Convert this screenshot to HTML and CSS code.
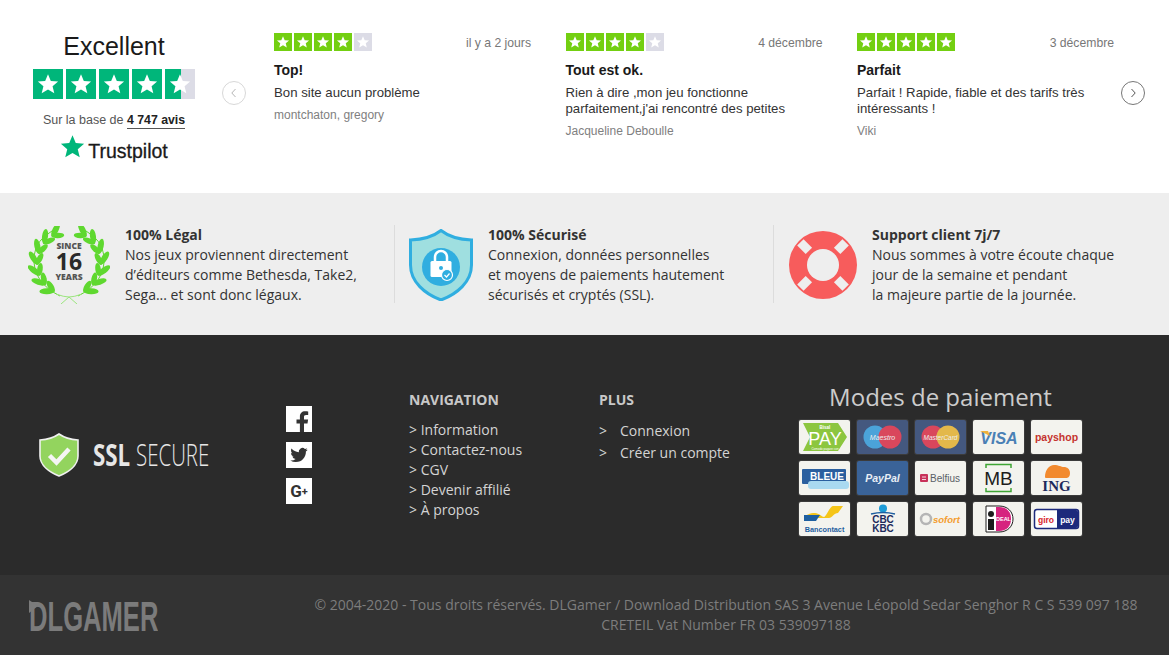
FILE: index.html
```html
<!DOCTYPE html>
<html lang="fr">
<head>
    <meta charset="UTF-8">
    <title>DLGamer</title>
    <link rel="stylesheet" href="styles.css">
</head>
<body>
    <svg class="defs" width="0" height="0">
        <defs>
            <polygon id="tp-star" points="12,3 14.6,9.2 21.3,9.7 16.200,14.100 17.800,20.600 12,17.100 6.200,20.600 7.800,14.100 2.700,9.700 9.400,9.200"/>
            <use id="star" href="#tp-star" transform="translate(1.560 1.560) scale(.87)"/>
            <g id="sprig">
                <ellipse cx="46" cy="1.500" rx="7.500" ry="3" transform="rotate(-32 46 1.500)"/>
                <ellipse cx="45" cy="7.500" rx="6.500" ry="2.800" transform="rotate(28 45 7.500)"/>
            </g>
            <g id="branch" fill="#5fd82f">
                <path d="M32 70Q4 56 6 30 8 14 24 5" fill="none" stroke="#5fd82f" stroke-width="1"/>
                <use href="#sprig" transform="rotate(-30 41 37)"/>
                <use href="#sprig" transform="rotate(-50 41 37)"/>
                <use href="#sprig" transform="rotate(-70 41 37)"/>
                <use href="#sprig" transform="rotate(-90 41 37)"/>
                <use href="#sprig" transform="rotate(-110 41 37)"/>
                <use href="#sprig" transform="rotate(-130 41 37)"/>
                <use href="#sprig" transform="rotate(-150 41 37)"/>
            </g>
        </defs>
    </svg>

    <section class="reviews">
        <div class="summary">
            <div class="summary-title">Excellent</div>
            <div class="stars-big">
                <svg class="box green"><g fill="#fff" transform="scale(1.250)"><use href="#star"/></g></svg>
                <svg class="box green"><g fill="#fff" transform="scale(1.250)"><use href="#star"/></g></svg>
                <svg class="box green"><g fill="#fff" transform="scale(1.250)"><use href="#star"/></g></svg>
                <svg class="box green"><g fill="#fff" transform="scale(1.250)"><use href="#star"/></g></svg>
                <svg class="box half"><g fill="#fff" transform="scale(1.250)"><use href="#star"/></g></svg>
            </div>
            <div class="summary-count">Sur la base de <a class="count-link">4 747 avis</a></div>
            <div class="tp-logo">
                <svg width="25" height="25" viewBox="2 2.500 20 19"><use href="#tp-star" fill="#00b67a"/></svg>
                <span>Trustpilot</span>
            </div>
        </div>

        <div class="arrow arrow-prev">
            <svg width="8" height="10" viewBox="0 0 8 10"><path d="M5.500 1 1.800 5l3.700 4" fill="none" stroke="#b5b5b5" stroke-width="1"/></svg>
        </div>

        <div class="review-list">
            <article class="review">
                <div class="review-head">
                    <div class="stars-small">
                        <svg class="tick lime"><g fill="#fff" transform="scale(.75)"><use href="#star"/></g></svg>
                        <svg class="tick lime"><g fill="#fff" transform="scale(.75)"><use href="#star"/></g></svg>
                        <svg class="tick lime"><g fill="#fff" transform="scale(.75)"><use href="#star"/></g></svg>
                        <svg class="tick lime"><g fill="#fff" transform="scale(.75)"><use href="#star"/></g></svg>
                        <svg class="tick off"><g fill="#fff" transform="scale(.75)"><use href="#star"/></g></svg>
                    </div>
                    <span class="review-date">il y a 2 jours</span>
                </div>
                <h3>Top!</h3>
                <p>Bon site aucun problème</p>
                <div class="author">montchaton, gregory</div>
            </article>
            <article class="review">
                <div class="review-head">
                    <div class="stars-small">
                        <svg class="tick lime"><g fill="#fff" transform="scale(.75)"><use href="#star"/></g></svg>
                        <svg class="tick lime"><g fill="#fff" transform="scale(.75)"><use href="#star"/></g></svg>
                        <svg class="tick lime"><g fill="#fff" transform="scale(.75)"><use href="#star"/></g></svg>
                        <svg class="tick lime"><g fill="#fff" transform="scale(.75)"><use href="#star"/></g></svg>
                        <svg class="tick off"><g fill="#fff" transform="scale(.75)"><use href="#star"/></g></svg>
                    </div>
                    <span class="review-date">4 décembre</span>
                </div>
                <h3>Tout est ok.</h3>
                <p>Rien à dire ,mon jeu fonctionne<br>parfaitement,j'ai rencontré des petites</p>
                <div class="author">Jacqueline Deboulle</div>
            </article>
            <article class="review">
                <div class="review-head">
                    <div class="stars-small">
                        <svg class="tick lime"><g fill="#fff" transform="scale(.75)"><use href="#star"/></g></svg>
                        <svg class="tick lime"><g fill="#fff" transform="scale(.75)"><use href="#star"/></g></svg>
                        <svg class="tick lime"><g fill="#fff" transform="scale(.75)"><use href="#star"/></g></svg>
                        <svg class="tick lime"><g fill="#fff" transform="scale(.75)"><use href="#star"/></g></svg>
                        <svg class="tick lime"><g fill="#fff" transform="scale(.75)"><use href="#star"/></g></svg>
                    </div>
                    <span class="review-date">3 décembre</span>
                </div>
                <h3>Parfait</h3>
                <p>Parfait ! Rapide, fiable et des tarifs très<br>intéressants !</p>
                <div class="author">Viki</div>
            </article>
        </div>

        <div class="arrow arrow-next">
            <svg width="8" height="10" viewBox="0 0 8 10"><path d="M2.500 1 6.200 5 2.500 9" fill="none" stroke="#555" stroke-width="1"/></svg>
        </div>
    </section>

    <section class="features">
        <div class="feature feature-legal">
            <svg class="feature-icon" width="82" height="78" viewBox="0 0 82 78">
                <use href="#branch"/>
                <use href="#branch" transform="translate(82 0) scale(-1 1)"/>
                <path d="M28 68Q36 71 41 71L33 78M54 68Q46 71 41 71L49 78" fill="none" stroke="#9be57e" stroke-width="1"/>
                <text class="since" x="41" y="23" text-anchor="middle">SINCE</text>
                <text class="since-num" x="41" y="44" text-anchor="middle">16</text>
                <text class="since" x="41" y="54" text-anchor="middle">YEARS</text>
            </svg>
            <div class="feature-text">
                <h4>100% Légal</h4>
                Nos jeux proviennent directement<br>d’éditeurs comme Bethesda, Take2,<br>Sega... et sont donc légaux.
            </div>
        </div>
        <div class="feature feature-secure">
            <svg class="feature-icon" width="64" height="72" viewBox="0 0 64 72">
                <path d="M32 1.500C25 7 14 10.500 1.500 11V36C1.500 53 16 65 32 71 48 65 62.500 53 62.500 36V11C50 10.500 39 7 32 1.500Z" fill="#9fdfe0" stroke="#30aee0" stroke-width="3"/>
                <circle cx="32" cy="38" r="19" fill="#30aee0"/>
                <path d="M26 32v-4a6 6 0 0 1 12 0v4" fill="none" stroke="#fff" stroke-width="2.500"/>
                <rect x="21.500" y="32" width="21" height="16" rx="1.500" fill="#fff"/>
                <circle cx="32" cy="39" r="2" fill="#30aee0"/>
                <circle cx="38" cy="46" r="5.500" fill="#30aee0" stroke="#fff" stroke-width="1.200"/>
                <path d="M35.500 46l2 2 3-3.500" fill="none" stroke="#fff" stroke-width="1.200"/>
            </svg>
            <div class="feature-text">
                <h4>100% Sécurisé</h4>
                Connexion, données personnelles<br>et moyens de paiements hautement<br>sécurisés et cryptés (SSL).
            </div>
        </div>
        <div class="feature feature-support">
            <svg class="feature-icon" width="68" height="68" viewBox="-34 -34 68 68">
                <circle r="34" fill="#f75c5c"/>
                <circle r="16" fill="#eee"/>
                <g fill="#eee">
                    <rect x="-4.500" y="-32" width="9" height="12" transform="rotate(-45)"/>
                    <rect x="-4.500" y="-32" width="9" height="12" transform="rotate(45)"/>
                    <rect x="-4.500" y="-32" width="9" height="12" transform="rotate(135)"/>
                    <rect x="-4.500" y="-32" width="9" height="12" transform="rotate(-135)"/>
                </g>
            </svg>
            <div class="feature-text">
                <h4>Support client 7j/7</h4>
                Nous sommes à votre écoute chaque<br>jour de la semaine et pendant<br>la majeure partie de la journée.
            </div>
        </div>
    </section>

    <footer class="footer">
        <svg class="ssl" width="170" height="44" viewBox="0 0 170 44">
            <path d="M20 1C15 4.500 8 6.500 1 7V23C1 32 10 39 20 43 30 39 39 32 39 23V7C32 6.500 25 4.500 20 1Z" fill="#93d45e" stroke="#f0f0f0" stroke-width="1.600"/>
            <path d="M10.500 22.500 17.500 29.500 30 16" fill="none" stroke="#f5f5f5" stroke-width="4.500"/>
            <text class="ssl-bold" transform="translate(54 33) scale(.72 1)">SSL</text>
            <text class="ssl-light" transform="translate(97 33) scale(.66 1)">SECURE</text>
        </svg>

        <div class="social">
            <a class="social-link">
                <svg width="26" height="26" viewBox="-1.500 -2.500 26 26"><path d="M16.500 26V15h3.500l.6-4h-4.100V8.500c0-1.200.4-2 2.100-2h2.100V3c-.4 0-1.700-.2-3.100-.2-3.100 0-5.200 1.900-5.200 5.300V11H9v4h3.400v11z" fill="#333"/></svg>
            </a>
            <a class="social-link">
                <svg width="26" height="26" viewBox="-6 -6 36 36"><path d="M23.953 4.570a10 10 0 01-2.825.775 4.958 4.958 0 002.163-2.723c-.951.555-2.005.959-3.127 1.184a4.920 4.920 0 00-8.384 4.482C7.690 8.095 4.067 6.130 1.640 3.162a4.822 4.822 0 00-.666 2.475c0 1.710.870 3.213 2.188 4.096a4.904 4.904 0 01-2.228-.616v.060a4.923 4.923 0 003.946 4.827 4.996 4.996 0 01-2.212.085 4.936 4.936 0 004.604 3.417 9.867 9.867 0 01-6.102 2.105c-.390 0-.779-.023-1.170-.067a13.995 13.995 0 007.557 2.209c9.053 0 13.998-7.496 13.998-13.985 0-.210 0-.420-.015-.630A9.935 9.935 0 0024 4.590z" fill="#333"/></svg>
            </a>
            <a class="social-link gplus">G<small>+</small></a>
        </div>

        <nav class="nav-col">
            <h5>NAVIGATION</h5>
            <ul>
                <li>&gt; Information</li>
                <li>&gt; Contactez-nous</li>
                <li>&gt; CGV</li>
                <li>&gt; Devenir affilié</li>
                <li>&gt; À propos</li>
            </ul>
        </nav>

        <nav class="plus-col">
            <h5>PLUS</h5>
            <ul>
                <li><span>&gt;</span>Connexion</li>
                <li><span>&gt;</span>Créer un compte</li>
            </ul>
        </nav>

        <div class="payment">
            <h2>Modes de paiement</h2>
            <div class="pay-grid">
                <svg class="pay" viewBox="0 0 51 34">
                    <polygon points="4,3 39,3 48,17 39,31 4,31 11,17" fill="#8cc63f"/>
                    <text x="26" y="25" class="t" font-size="18" fill="#fff" text-anchor="middle">PAY</text>
                    <text x="26" y="9" class="t" font-size="4.500" fill="#fff" text-anchor="middle" font-weight="700">Bisal</text>
                    <text x="26" y="29.500" class="t" font-size="3" fill="#fff" text-anchor="middle">Comodo pagare con</text>
                </svg>
                <svg class="pay dark" viewBox="0 0 51 34">
                    <circle cx="18" cy="17" r="11.500" fill="#4ba3d9"/><circle cx="33" cy="17" r="11.500" fill="#d9475c"/>
                    <text x="25.500" y="19.500" class="t i" font-size="7" fill="#eee" text-anchor="middle">Maestro</text>
                </svg>
                <svg class="pay dark" viewBox="0 0 51 34">
                    <circle cx="18" cy="17" r="11.500" fill="#d9475c"/><circle cx="33" cy="17" r="11.500" fill="#e3b84a"/>
                    <text x="25.500" y="19.500" class="t i" font-size="6.500" fill="#eee" text-anchor="middle">MasterCard</text>
                </svg>
                <svg class="pay" viewBox="0 0 51 34">
                    <text x="26" y="24" class="t i b" font-size="16" fill="#4a80b5" text-anchor="middle">VISA</text>
                    <path d="M7 11h8l2 5z" fill="#eeb13b"/>
                </svg>
                <svg class="pay" viewBox="0 0 51 34">
                    <text x="25.500" y="21" class="t b" font-size="10.500" fill="#c5332f" text-anchor="middle">payshop</text>
                </svg>

                <svg class="pay" viewBox="0 0 51 34">
                    <rect x="3" y="8" width="44" height="15" rx="1" fill="#2a5f9f"/>
                    <rect x="9" y="20" width="41" height="8" rx="3" fill="#a9d9f0"/>
                    <text x="28" y="18.500" class="t b" font-size="10" fill="#fff" text-anchor="middle">BLEUE</text>
                </svg>
                <svg class="pay blue" viewBox="0 0 51 34">
                    <text x="25.500" y="20.500" class="t i b" font-size="10.500" fill="#e8eef5" text-anchor="middle">PayPal</text>
                </svg>
                <svg class="pay" viewBox="0 0 51 34">
                    <rect x="5" y="13" width="8" height="8" rx="1" fill="#c8325a"/>
                    <path d="M7 16h4M7 18.500h4" stroke="#fff" stroke-width=".8"/>
                    <text x="15" y="21" class="t" font-size="10" fill="#5a6066">Belfius</text>
                </svg>
                <svg class="pay" viewBox="0 0 51 34">
                    <path d="M13 7V3.500h25V7M13 27v3.500h25V27" fill="none" stroke="#3fa535" stroke-width="1.500"/>
                    <text x="25.500" y="24" class="t" font-size="19" fill="#1c1c1c" text-anchor="middle">MB</text>
                </svg>
                <svg class="pay" viewBox="0 0 51 34">
                    <path d="M14 16c0-7 4-12 9-12s7 2 10 2 6 2 6 6-2 5-4 5H16c-1 0-2 0-2-1z" fill="#f28a2e"/>
                    <text x="25.500" y="30" class="s b" font-size="15" fill="#1d2a5c" text-anchor="middle">ING</text>
                </svg>

                <svg class="pay" viewBox="0 0 51 34">
                    <path d="M16 11c4 0 7 4 9 4s6-11 9-11h10l-5 7c-4 0-6 5-9 5H5c1-3 6-5 11-5z" fill="#f5c518"/>
                    <path d="M5 13h16l-4 6H5z" fill="#1e5fa0"/>
                    <text x="25.500" y="29.500" class="t b" font-size="7.300" fill="#1e5fa0" text-anchor="middle">Bancontact</text>
                </svg>
                <svg class="pay" viewBox="0 0 51 34">
                    <circle cx="26" cy="6.500" r="4" fill="#1e9cd7"/>
                    <path d="M14 12q12-3 24 0" fill="none" stroke="#1e5fa0" stroke-width="1.500"/>
                    <text x="26" y="21" class="t b" font-size="10" fill="#1d2a5c" text-anchor="middle">CBC</text>
                    <text x="26" y="30" class="t b" font-size="10" fill="#1d2a5c" text-anchor="middle">KBC</text>
                </svg>
                <svg class="pay" viewBox="0 0 51 34">
                    <circle cx="11" cy="17" r="5" fill="none" stroke="#b5b5b5" stroke-width="2.500"/>
                    <text x="18" y="21" class="t i b" font-size="9.500" fill="#f39c2d">sofort</text>
                </svg>
                <svg class="pay" viewBox="0 0 51 34">
                    <path d="M13 4h13c9 0 14 6 14 13s-5 13-14 13H13z" fill="#fff" stroke="#1c1c1c" stroke-width="1"/>
                    <path d="M23 5h3c8 0 12 5 12 12s-4 12-12 12h-3z" fill="#d6247f"/>
                    <rect x="15" y="17" width="6" height="11" fill="#1c1c1c"/><circle cx="18" cy="12" r="3" fill="#1c1c1c"/>
                    <text x="30.500" y="19" class="t b" font-size="5.500" fill="#fff" text-anchor="middle">DEAL</text>
                </svg>
                <svg class="pay" viewBox="0 0 51 34">
                    <rect x="3.500" y="7.500" width="44" height="19" rx="2.500" fill="#fff" stroke="#1d2a7c" stroke-width="1.500"/>
                    <path d="M26 8h19q2 0 2 2v14q0 2-2 2H26z" fill="#1d2a7c"/>
                    <text x="15" y="20.500" class="t b" font-size="8.500" fill="#d9262e" text-anchor="middle">giro</text>
                    <text x="36.500" y="20.500" class="t b" font-size="8.500" fill="#fff" text-anchor="middle">pay</text>
                </svg>
            </div>
        </div>
    </footer>

    <div class="bottom">
        <svg class="dl-logo" width="129" height="50" viewBox="0 -8 129 50">
            <text transform="translate(0 31) scale(.61 1)">DLGAMER</text>
            <polygon points="0,0 0,13 9,6" fill="#7b7b7b"/>
        </svg>
        <div class="copyright">© 2004-2020 - Tous droits réservés. DLGamer / Download Distribution SAS 3 Avenue Léopold Sedar Senghor R C S 539 097 188<br>CRETEIL Vat Number FR 03 539097188</div>
    </div>
</body>
</html>
```

FILE: styles.css
```css
body {
    margin: 0;
    font-family: "Open Sans", sans-serif;
    font-size: 14px;
    background-color: #333;
    overflow: hidden;
}

.defs {
    position: absolute;
}

/* reviews band */
.reviews {
    display: flex;
    align-items: flex-start;
    box-sizing: border-box;
    height: 193px;
    padding: 33px 0 0 33px;
    background-color: #fff;
    font-family: "Liberation Sans", Arial, sans-serif;
    color: #222;
}

.summary {
    width: 162px;
    text-align: center;
}

.summary-title {
    font-size: 25px;
    line-height: 26px;
    color: #1a1a1a;
}

.stars-big {
    display: flex;
    gap: 3px;
    margin-top: 10px;
}

.box {
    width: 30px;
    height: 30px;
}

.green {
    background-color: #00b67a;
}

.half {
    background: linear-gradient(90deg, #00b67a 52%, #dcdce6 52%);
}

.summary-count {
    margin-top: 13px;
    font-size: 12.500px;
    line-height: 16px;
    color: #555;
}

.count-link {
    color: #222;
    font-weight: 700;
    font-size: 12.300px;
    border-bottom: 1px solid #555;
    padding-bottom: 1px;
}

.tp-logo {
    display: flex;
    justify-content: center;
    align-items: flex-end;
    gap: 3px;
    margin-top: 6px;
    height: 28px;
}

.tp-logo span {
    font-size: 19.500px;
    line-height: 22px;
    color: #1a1a1a;
    -webkit-text-stroke: 0.3px #1a1a1a;
}

.tp-logo svg {
    margin-bottom: 3px;
}

.arrow {
    display: flex;
    justify-content: center;
    align-items: center;
    box-sizing: border-box;
    width: 24px;
    height: 24px;
    margin-top: 48px;
    border-radius: 50%;
}

.arrow-prev {
    margin-left: 27px;
    border: 1px solid #d8d8d8;
}

.arrow-next {
    margin-left: 7px;
    border: 1px solid #777;
}

.review-list {
    display: flex;
    gap: 34.500px;
    margin-left: 28px;
}

.review {
    width: 257px;
}

.review-head {
    display: flex;
    justify-content: space-between;
    align-items: center;
    height: 18px;
}

.stars-small {
    display: flex;
    gap: 2px;
}

.tick {
    width: 18px;
    height: 18px;
}

.lime {
    background-color: #73cf11;
}

.off {
    background-color: #dcdce6;
}

.review-date {
    font-size: 12.200px;
    color: #777;
    padding-top: 2px;
}

.review h3 {
    margin: 11px 0 0;
    font-size: 14px;
    line-height: 16px;
    color: #1a1a1a;
}

.review p {
    margin: 7px 0 0;
    font-size: 13.200px;
    line-height: 16px;
    color: #333;
}

.author {
    margin-top: 6px;
    font-size: 12px;
    line-height: 16px;
    color: #808080;
}

/* grey band */
.features {
    display: flex;
    box-sizing: border-box;
    height: 142px;
    padding-top: 32px;
    background-color: #eee;
    color: #333;
    line-height: 20px;
}

.feature {
    display: flex;
    align-items: flex-start;
    gap: 15px;
    height: 78px;
}

.feature-icon {
    flex: none;
    margin-top: 1px;
}

.feature-legal {
    width: 366px;
    padding-left: 28px;
    border-right: 1px solid #dcdcdc;
}

.feature-secure {
    width: 364px;
    padding-left: 14px;
    border-right: 1px solid #dcdcdc;
}

.feature-support {
    padding-left: 15px;
}

.feature-secure .feature-icon {
    margin-top: 4px;
}

.feature-support .feature-icon {
    margin-top: 6px;
}

.feature-text {
    white-space: nowrap;
}

.feature-text h4 {
    margin: 0;
    font-size: 14px;
    font-weight: 700;
}

.since {
    font-family: "Open Sans", sans-serif;
    font-size: 8.500px;
    font-weight: 800;
    fill: #555;
}

.since-num {
    font-family: "Open Sans", sans-serif;
    font-size: 23px;
    font-weight: 700;
    fill: #2a2a2a;
}

/* dark footer */
.footer {
    display: flex;
    align-items: flex-start;
    box-sizing: border-box;
    height: 240px;
    padding: 45px 0 0 39px;
    background-color: #2b2b2b;
    color: #d4d4d4;
}

.ssl {
    flex: none;
    margin-top: 53px;
}

.ssl-bold,
.ssl-light {
    font-family: "Open Sans", sans-serif;
    font-size: 31px;
    fill: #e6e6e6;
}

.ssl-bold {
    font-weight: 700;
}

.ssl-light {
    font-weight: 300;
}

.social {
    display: flex;
    flex-direction: column;
    gap: 10px;
    margin: 26px 0 0 77px;
}

.social-link {
    display: flex;
    justify-content: center;
    align-items: center;
    width: 26px;
    height: 26px;
    background-color: #fff;
}

.gplus {
    font-family: "Roboto", sans-serif;
    font-size: 17px;
    font-weight: 700;
    color: #333;
}

.gplus small {
    font-size: 11px;
}

.footer h5 {
    margin: 0;
    font-size: 14px;
    line-height: 20px;
    font-weight: 700;
    color: #c8c8c8;
}

.footer ul {
    margin: 10px 0 0;
    padding: 0;
    list-style: none;
}

.nav-col {
    width: 190px;
    margin: 10px 0 0 97px;
    line-height: 20px;
}

.plus-col {
    width: 200px;
    margin-top: 10px;
    line-height: 22px;
}

.plus-col span {
    display: inline-block;
    width: 21px;
}

.payment h2 {
    margin: 0;
    padding-top: 1px;
    width: 283px;
    text-align: center;
    font-size: 24px;
    line-height: 32px;
    font-weight: 400;
    color: #ccc;
}

.pay-grid {
    display: grid;
    grid-template-columns: repeat(5, 51px);
    grid-auto-rows: 34px;
    gap: 7px;
    margin-top: 7px;
}

.pay {
    width: 51px;
    height: 34px;
    border-radius: 2px;
    background-color: #f3f3ee;
    box-shadow: 0 0 0 1px rgba(255, 255, 255, 0.08);
}

.dark {
    background-color: #44587f;
}

.blue {
    background-color: #3a6398;
}

.t {
    font-family: "Liberation Sans", Arial, sans-serif;
}

.s {
    font-family: "Liberation Serif", serif;
}

.i {
    font-style: italic;
}

.b {
    font-weight: 700;
}

/* copyright bar */
.bottom {
    display: flex;
    box-sizing: border-box;
    height: 80px;
    padding: 20px 31px 0 29px;
    background-color: #333;
}

.dl-logo {
    flex: none;
    margin-top: -3px;
}

.dl-logo text {
    font-family: "Liberation Sans", Arial, sans-serif;
    font-size: 42px;
    font-weight: 700;
    fill: #7b7b7b;
}

.copyright {
    flex: 1;
    margin-left: 156px;
    text-align: center;
    line-height: 20px;
    color: #7d7d7d;
    white-space: nowrap;
}
```
